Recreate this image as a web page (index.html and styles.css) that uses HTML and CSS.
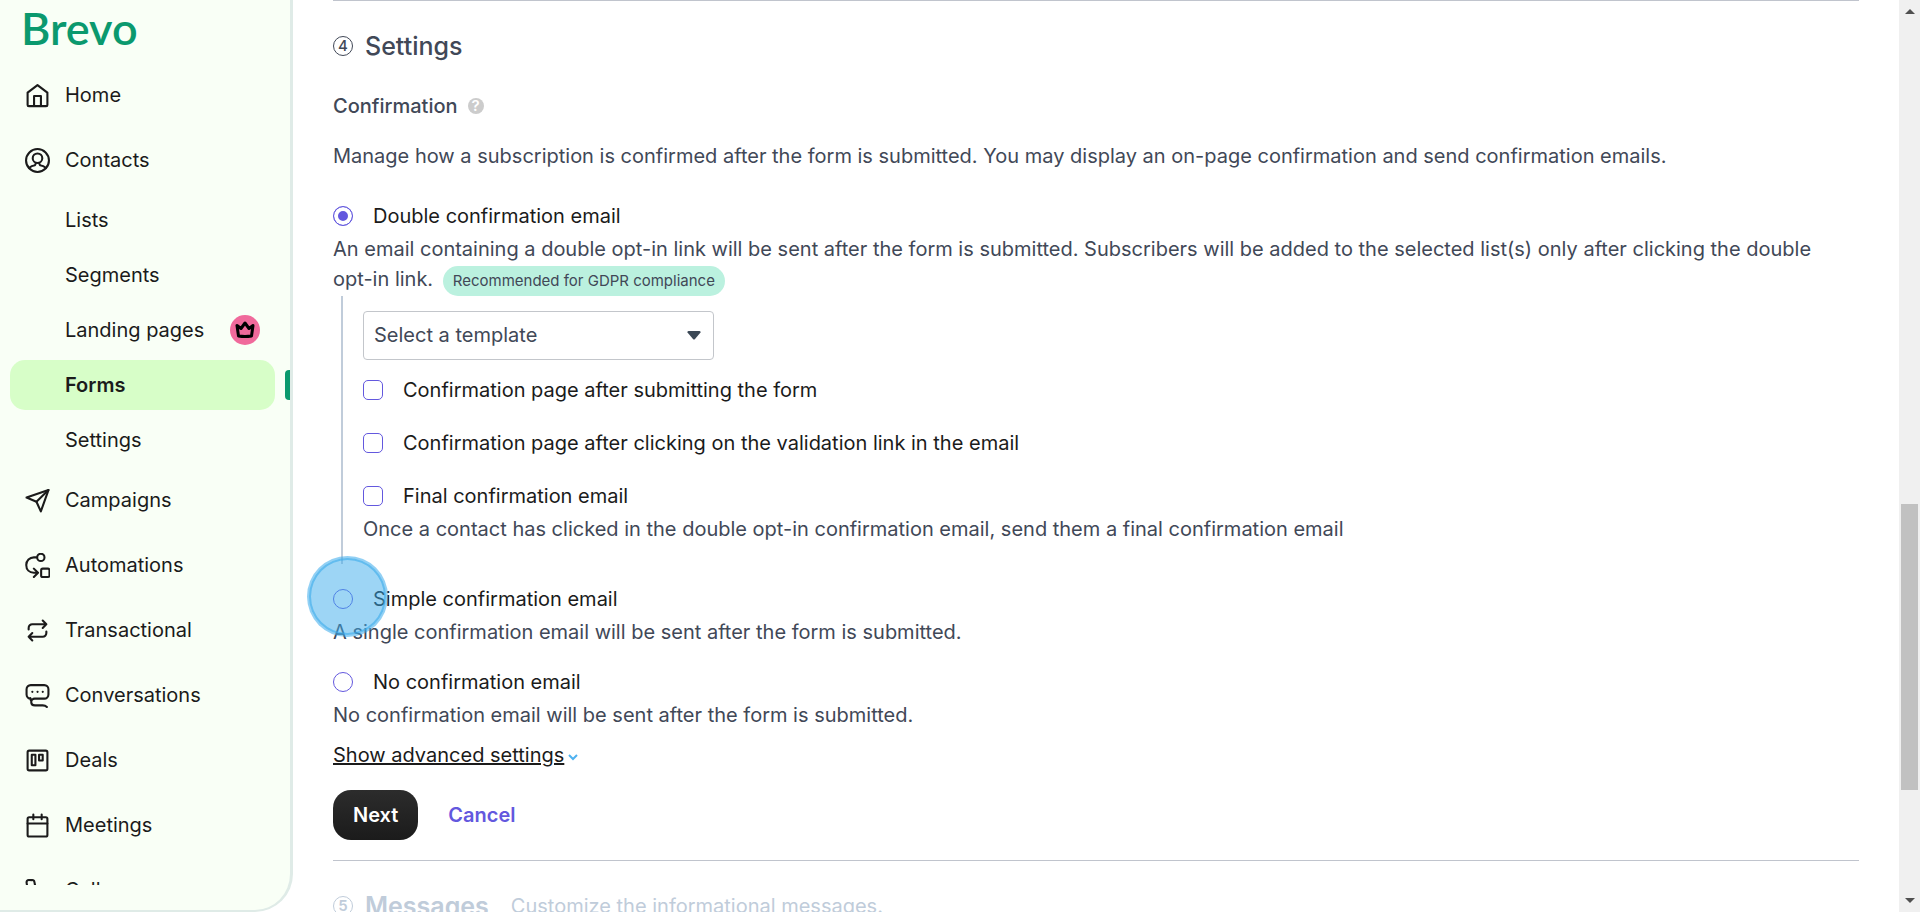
FILE: index.html
```html
<!DOCTYPE html>
<html lang="en">
<head>
    <meta charset="UTF-8">
    <meta name="viewport" content="width=device-width, initial-scale=1.0">
    <title>Brevo - Forms</title>
    <link rel="stylesheet" href="styles.css">
</head>
<body>
    <aside class="sidebar">
        <a href="#" class="logo">Brevo</a>
        <nav class="nav">
            <a href="#" class="nav-item">
                <svg viewBox="0 0 24 24"><path d="M2.5 9.2 12 2l9.500 7.200V21a1.200 1.200 0 0 1-1.200 1.200H3.700A1.200 1.200 0 0 1 2.500 21z"/><path d="M8.700 22v-9.500h6.600V22"/></svg>
                Home
            </a>
            <a href="#" class="nav-item">
                <svg viewBox="0 0 24 24"><circle cx="12" cy="12" r="11"/><circle cx="12" cy="9.800" r="4.600"/><path d="M3.800 19.200c1.800-1.800 4-2.600 5.800-2.700l1-2.200M20.200 19.200c-1.800-1.800-4-2.600-5.800-2.700l-1-2.200"/></svg>
                Contacts
            </a>
            <div class="sub-nav">
                <a href="#" class="nav-item">Lists</a>
                <a href="#" class="nav-item">Segments</a>
                <a href="#" class="nav-item">Landing pages
                    <span class="crown"><svg viewBox="0 0 20 20"><path d="M2 5.500 3.500 16q6.500 1 13 0L18 5.500l-4 3L10 3 6 8.500z"/></svg></span>
                </a>
                <a href="#" class="nav-item active">Forms</a>
                <a href="#" class="nav-item">Settings</a>
            </div>
            <a href="#" class="nav-item">
                <svg viewBox="0 0 24 24"><path d="M22.500 2 1.500 9.200l9.500 4 4.200 9.300z"/><path d="M22.500 2 11 13.200"/></svg>
                Campaigns
            </a>
            <a href="#" class="nav-item">
                <svg viewBox="0 0 24 24"><circle cx="15.200" cy="4.200" r="3.500"/><path d="M11.500 4.200H8.500a7.300 7.300 0 0 0-7.300 7.300c0 4.500 3 7.500 7.300 7.500h3.500M8.500 15l4 4-4 4"/><rect x="15.500" y="15" width="8" height="8" rx="1.500"/></svg>
                Automations
            </a>
            <a href="#" class="nav-item">
                <svg viewBox="0 0 24 24"><path d="M3.500 11V9.500a3.500 3.500 0 0 1 3.500-3.500h13.500M17 2.500 20.500 6 17 9.500M20.500 13v1.500a3.500 3.500 0 0 1-3.500 3.500H3.500M7 14.500 3.500 18 7 21.500"/></svg>
                Transactional
            </a>
            <a href="#" class="nav-item">
                <svg viewBox="0 0 24 24"><path d="M5.500 15A4 4 0 0 1 1.500 11V6a4 4 0 0 1 4-4h13a4 4 0 0 1 4 4v5a4 4 0 0 1-4 4H9.500a3.300 3.300 0 0 0-3.500 3.500c0 2 1.500 3 3.500 3H17q2.500 0 4 1.500M5 14.500q.3 2 1 3"/><path d="M7 8.500h.1M12 8.500h.1M17 8.500h.1"/></svg>
                Conversations
            </a>
            <a href="#" class="nav-item">
                <svg viewBox="0 0 24 24"><rect x="2.500" y="2.500" width="19" height="19" rx="1.500"/><rect x="6.500" y="6.500" width="3.500" height="10"/><rect x="13.500" y="6.500" width="3.500" height="5.500"/></svg>
                Deals
            </a>
            <a href="#" class="nav-item">
                <svg viewBox="0 0 24 24"><rect x="2.500" y="4" width="19" height="18.500" rx="1.500"/><path d="M2.500 10h19M8 1.500V6M16 1.500V6"/></svg>
                Meetings
            </a>
            <a href="#" class="nav-item">
                <svg viewBox="0 0 24 24"><path d="M22 17v3.500a2 2 0 0 1-2.200 2C9.500 21.500 2.500 14 1.500 4.200A2 2 0 0 1 3.500 2H7a2 2 0 0 1 2 1.700l.8 4L7.500 10q2.500 4.500 6.500 6.500l2.300-2.300 4 .8A2 2 0 0 1 22 17z"/></svg>
                Calls
            </a>
        </nav>
    </aside>

    <main class="content">
        <section class="step">
            <h2><span class="step-number">4</span>Settings</h2>
            <h3>Confirmation <span class="help">?</span></h3>
            <p class="intro">Manage how a subscription is confirmed after the form is submitted. You may display an on-page confirmation and send confirmation emails.</p>

            <form>
                <label class="choice"><input type="radio" name="confirmation" checked>Double confirmation email</label>
                <p class="hint">An email containing a double opt-in link will be sent after the form is submitted. Subscribers will be added to the selected list(s) only after clicking the double <span class="nowrap">opt-in</span> link. <span class="badge">Recommended for GDPR compliance</span></p>
                <div class="options">
                    <div class="select-wrap">
                        <select aria-label="Select a template">
                            <option>Select a template</option>
                        </select>
                        <svg class="caret" viewBox="0 0 14 9"><path d="M1.500 0h11q1.500 0 1 1.500L8 8Q7 9 6 8L.5 1.500Q0 0 1.500 0z"/></svg>
                    </div>
                    <label class="choice"><input type="checkbox">Confirmation page after submitting the form</label>
                    <label class="choice"><input type="checkbox">Confirmation page after clicking on the validation link in the email</label>
                    <label class="choice"><input type="checkbox">Final confirmation email</label>
                    <p class="hint">Once a contact has clicked in the double opt-in confirmation email, send them a final confirmation email</p>
                </div>

                <label class="choice spaced"><input type="radio" name="confirmation">Simple confirmation email<span class="click-marker"></span></label>
                <p class="hint">A single confirmation email will be sent after the form is submitted.</p>

                <label class="choice spaced"><input type="radio" name="confirmation">No confirmation email</label>
                <p class="hint">No confirmation email will be sent after the form is submitted.</p>

                <div class="advanced">
                    <a href="#">Show advanced settings</a>
                    <svg viewBox="0 0 10 10"><path d="M1 3l4 4 4-4"/></svg>
                </div>

                <div class="actions">
                    <button type="button" class="next">Next</button>
                    <button type="button" class="cancel">Cancel</button>
                </div>
            </form>
        </section>

        <section class="step disabled">
            <h2><span class="step-number">5</span>Messages <small>Customize the informational messages.</small></h2>
        </section>
    </main>

    <div class="scrollbar">
        <span class="arrow-up"></span>
        <span class="thumb"></span>
        <span class="arrow-down"></span>
    </div>
</body>
</html>
```
FILE: styles.css
```css
* {
    box-sizing: border-box;
}
body {
    margin: 0;
    display: flex;
    height: 100vh;
    overflow: hidden;
    background: white;
    color: #414857;
    font-family: Inter, sans-serif;
    font-size: 20px;
    font-weight: 400;
    line-height: 30px;
}
h2, h3, p {
    margin: 0;
}
a {
    color: inherit;
    text-decoration: none;
}

/* sidebar */
.sidebar {
    display: flex;
    flex-direction: column;
    flex: none;
    width: 293px;
    padding-bottom: 25px;
    background: #f9fff6;
    border-right: 3px solid #dfebe7;
    border-bottom: 2px solid #dfebe7;
    border-bottom-right-radius: 38px;
    color: #1b1b1b;
}
.logo {
    height: 70px;
    padding-left: 21px;
    color: #0b996e;
    font-family: Lato, sans-serif;
    font-size: 45px;
    font-weight: 600;
    line-height: 56px;
}
.nav {
    display: flex;
    flex-direction: column;
    gap: 15px;
    flex: 1;
    min-height: 0;
    padding-left: 10px;
    overflow: hidden;
}
.nav-item {
    display: flex;
    align-items: center;
    flex: none;
    gap: 15px;
    height: 50px;
    width: 265px;
    padding: 0 15px;
    border-radius: 15px;
}
.nav-item svg {
    width: 25px;
    height: 25px;
    fill: none;
    stroke: #1b1b1b;
    stroke-width: 2;
    stroke-linecap: round;
    stroke-linejoin: round;
}
.sub-nav {
    display: flex;
    flex-direction: column;
    flex: none;
    gap: 5px;
    margin: -5px 0;
}
.sub-nav .nav-item {
    padding-left: 55px;
}
.sub-nav .active {
    position: relative;
    background: #d7fec8;
    font-weight: 600;
}
.active::after {
    content: "";
    position: absolute;
    left: 275px;
    top: 10px;
    width: 5px;
    height: 30px;
    background: #0b996e;
    border-radius: 4px 0 0 4px;
}
.crown {
    display: flex;
    align-items: center;
    justify-content: center;
    width: 30px;
    height: 30px;
    margin-left: auto;
    border-radius: 50%;
    background: #f06a9b;
}
.crown svg {
    width: 20px;
    height: 20px;
    stroke: black;
    stroke-width: 3;
}

/* form steps */
.content {
    flex: 1;
    min-width: 0;
    padding: 0 40px;
    overflow: hidden;
}
.step {
    padding: 30px 0 20px;
    border-top: 1px solid #c0c4cd;
}
h2 {
    display: flex;
    align-items: center;
    font-size: 25px;
    font-weight: 500;
}
.step-number {
    width: 20px;
    height: 20px;
    margin-right: 12px;
    border: 1px solid;
    border-radius: 50%;
    font-size: 15px;
    line-height: 18px;
    text-align: center;
}
h3 {
    display: flex;
    align-items: center;
    gap: 10px;
    margin-top: 30px;
    font-size: 20px;
    font-weight: 500;
}
.help {
    width: 16px;
    height: 16px;
    border-radius: 50%;
    background: #cccccc;
    color: white;
    font-size: 15px;
    font-weight: 600;
    line-height: 16px;
    text-align: center;
}
.intro {
    margin: 20px 0 30px;
}
.choice {
    position: relative;
    display: flex;
    align-items: center;
    gap: 20px;
    color: #1b1b1b;
}
.spaced {
    margin-top: 20px;
}
.hint {
    margin-top: 3px;
}
.nowrap {
    white-space: nowrap;
}
input {
    appearance: none;
    width: 20px;
    height: 20px;
    margin: 0;
    border: 1px solid #6358de;
    border-radius: 5px;
    background: white;
}
input[type="radio"] {
    border-radius: 50%;
}
input[type="radio"]:checked {
    border: 1px solid #6358de;
    background: #6358de;
    box-shadow: inset 0 0 0 4px white;
}
.badge {
    display: inline-block;
    margin-left: 4px;
    padding: 0 10px;
    border-radius: 15px;
    background: #bbf1df;
    font-size: 15px;
    vertical-align: middle;
}
.options {
    margin-left: 8px;
    padding: 15px 0 20px 20px;
    border-left: 2px solid #c0ccda;
}
.options .choice + .choice {
    margin-top: 23px;
}
.select-wrap {
    position: relative;
    width: 351px;
    margin-bottom: 15px;
}
select {
    display: block;
    appearance: none;
    width: 100%;
    height: 49px;
    padding: 0 10px;
    border: 1px solid #c3c6cb;
    border-radius: 4px;
    background: white;
    color: #414857;
    font: inherit;
}
.caret {
    position: absolute;
    right: 13px;
    top: 20px;
    width: 14px;
    height: 9px;
    fill: #3b4856;
}
.click-marker {
    position: absolute;
    left: -26px;
    top: -28px;
    width: 81px;
    height: 81px;
    border: 2px solid rgba(59, 171, 235, 0.1);
    border-radius: 50%;
    background: rgba(59, 171, 235, 0.5);
    box-shadow: inset 0 0 0 2px rgba(59, 171, 235, 0.6);
}
.advanced {
    display: flex;
    align-items: center;
    gap: 4px;
    margin-top: 10px;
    color: #1b1b1b;
}
.advanced a {
    text-decoration: underline;
}
.advanced svg {
    width: 10px;
    height: 10px;
    margin-top: 5px;
    fill: none;
    stroke: #4fb2f0;
    stroke-width: 2;
}
.actions {
    display: flex;
    gap: 10px;
    margin-top: 20px;
}
button {
    height: 50px;
    padding: 0 20px;
    border: none;
    border-radius: 18px;
    background: none;
    font: inherit;
    font-weight: 600;
}
.next {
    background: linear-gradient(#2c2c2c, #1b1b1b);
    color: white;
}
.cancel {
    color: #6358de;
}
.disabled {
    color: #c0ccda;
}
.disabled h2 {
    font-weight: 600;
}
.disabled small {
    margin-left: 22px;
    font-size: 20px;
    font-weight: 400;
}

/* page scrollbar */
.scrollbar {
    display: flex;
    flex-direction: column;
    align-items: center;
    flex: none;
    width: 21px;
    padding: 9px 0;
    background: #f0f0f0;
}
.arrow-up, .arrow-down {
    border: 5px solid transparent;
    border-top-width: 0;
    border-bottom-color: #505050;
}
.arrow-down {
    border-top: 5px solid #505050;
    border-bottom-width: 0;
    margin-top: auto;
}
.thumb {
    width: 17px;
    height: 286px;
    margin-top: 490px;
    background: #c1c1c1;
}
```
